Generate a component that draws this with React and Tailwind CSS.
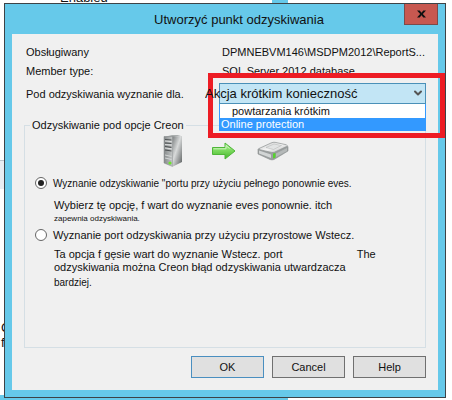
import { useState } from "react";
import { ChevronDown } from "lucide-react";

function ServerIcon() {
  return (
    <svg width="20" height="32" viewBox="0 0 20 32" aria-hidden="true">
      <defs>
        <linearGradient id="side" x1="0" x2="1" y1="0" y2="1">
          <stop offset="0" stopColor="#75797a" />
          <stop offset="0.45" stopColor="#d8dada" />
          <stop offset="1" stopColor="#565a5b" />
        </linearGradient>
        <linearGradient id="front" x1="0" x2="1">
          <stop offset="0" stopColor="#85898a" />
          <stop offset="1" stopColor="#c3c6c6" />
        </linearGradient>
      </defs>
      <path d="M1 2 9 0h9l-7 2z" fill="#a9adad" />
      <path d="M9 1.500 19 1v26l-9 4.500z" fill="url(#side)" />
      <path d="M1 1.500h8.500v30L1 28z" fill="url(#front)" stroke="#85898a" strokeWidth="0.500" />
      <path d="M2 4.500l6.500.5M2 8l6.500.5M2 11.500l6.500.8M2 15l6.500 1" stroke="#4f5354" strokeWidth="1.200" />
      <path d="M2 6l6.500.5M2 9.500l6.500.5M2 13l6.500.8" stroke="#eceeee" strokeWidth="0.800" />
      <path d="M2 20l6.500 1.500M2 23l6.500 1.500" stroke="#dfe2e2" strokeWidth="0.800" />
      <circle cx="7" cy="28" r="1.600" fill="#6be42a" />
    </svg>
  );
}

function ArrowIcon() {
  return (
    <svg width="26" height="20" viewBox="0 0 26 20" aria-hidden="true">
      <defs>
        <linearGradient id="arrow" x1="0" x2="0" y1="0" y2="1">
          <stop offset="0" stopColor="#b4ee9c" />
          <stop offset="0.5" stopColor="#78d85a" />
          <stop offset="1" stopColor="#43b52c" />
        </linearGradient>
      </defs>
      <path d="M1.500 6.500H14V2l10 8L14 18v-4.500H1.500z" fill="url(#arrow)" stroke="#4fb638" strokeLinejoin="round" />
      <path d="M2.500 7.800H15V4.500l3.500 3" fill="none" stroke="#d3f6c5" strokeWidth="0.900" />
    </svg>
  );
}

function DriveIcon() {
  return (
    <svg width="32" height="20" viewBox="0 0 32 20" aria-hidden="true">
      <defs>
        <linearGradient id="drive" x1="0" x2="1" y1="0" y2="1">
          <stop offset="0" stopColor="#c2c4c4" />
          <stop offset="0.5" stopColor="#f4f4f4" />
          <stop offset="1" stopColor="#b4b6b6" />
        </linearGradient>
      </defs>
      <path d="M1 8v5l12 5.500q2 .8 4 0L31 10V5.500z" fill="#9a9e9e" stroke="#8a8e8e" strokeWidth="0.600" strokeLinejoin="round" />
      <path d="M2 7.500 14 2q2-1 4-.7l11.500 2.500q1.500.7 0 1.700l-12 5.700q-1.500.6-3 .2L2 8.500q-1-.5 0-1z" fill="url(#drive)" stroke="#8e9292" strokeWidth="0.700" />
      <path d="M9 6.500 17 3l7.500 1.500-8 4z" fill="#e2e4e4" stroke="#aeb1b1" strokeWidth="0.500" />
      <path d="M2 9.500l12 4v3.500L2 12.500z" fill="#d2d5d5" />
      <path d="M19 12.500l11-5.500v3l-11 6z" fill="#b5b9b9" />
      <path d="M16 12.500l2.500-.5v4.500L16 17.500z" fill="#55d32b" />
    </svg>
  );
}

function RadioOption({ id, label, checked, onSelect, labelClass, children }) {
  return (
    <div>
      <div className="flex h-5 items-center gap-[6px]">
        <input
          type="radio"
          id={id}
          name="recovery"
          checked={checked}
          onChange={onSelect}
          className="flex size-3 shrink-0 appearance-none items-center justify-center rounded-full border border-[#666] bg-white before:hidden before:size-[6px] before:rounded-full before:bg-[#222] checked:before:block"
        />
        <label htmlFor={id} className={labelClass}>
          {label}
        </label>
      </div>
      <div className="pl-[19px]">{children}</div>
    </div>
  );
}

const buttonBase = "h-[22px] w-[73px] border bg-[#e0e0e0] leading-4";

export default function App() {
  const [choice, setChoice] = useState("full");
  return (
    <div className="relative min-h-screen overflow-hidden bg-white pt-[3px] pr-[6px] pb-[3px] pl-1 font-['Liberation_Sans',Arial,sans-serif] text-[11px] leading-[13px] text-[#111]">
      <div className="absolute top-[-9px] left-[60px] text-[13px]">Enabled</div>
      <div className="absolute top-0 left-[272px] h-[3px] w-4 bg-[#66c9ea]" />
      <div className="absolute top-[160px] left-0 h-[29px] w-1 border-t border-[#bbc4cc] bg-[#e8edf2]" />
      <div className="absolute top-[321px] left-[1px] text-[13px]">C</div>
      <div className="absolute top-[336px] left-[1px] text-[13px]">f</div>
      <div className="absolute bottom-[1px] left-0 h-[5px] w-[288px] bg-[#66c9ea]" />

      <div role="dialog" aria-labelledby="title" className="relative border border-[#3d4347] bg-[#66c9ea] px-[7px] pb-[7px]">
        <div className="flex h-[30px] items-start">
          <h1 id="title" className="flex-1 pt-2 pl-[62px] text-center text-[13px] leading-4">
            Utworzyć punkt odzyskiwania
          </h1>
          <button
            type="button"
            aria-label="Close"
            className="flex h-[21px] w-[34px] items-center justify-center border border-t-0 border-[#7c4a4a] bg-[#c75850]"
          >
            <svg width="9" height="8" viewBox="0 0 10 8" aria-hidden="true">
              <path d="M0 0h3l2 2.500L7 0h3L6.500 4 10 8H7L5 5.500 3 8H0l3.500-4z" fill="#111" />
            </svg>
          </button>
        </div>

        <div className="bg-[#f0f0f0] px-3 pt-2 pb-3">
          <div className="grid grid-cols-[196px_1fr] pl-[2px]">
            <div className="h-5 leading-5">Obsługiwany</div>
            <div className="h-5 leading-5 whitespace-nowrap">DPMNEBVM146\MSDPM2012\ReportS...</div>
            <div className="h-[18px] leading-[18px]">Member type:</div>
            <div className="h-[18px] leading-[18px] whitespace-nowrap">SQL Server 2012 database</div>
          </div>

          <div className="relative mt-[3px] flex items-center pl-[2px]">
            <label htmlFor="protection" className="w-[193px] shrink-0 leading-5">
              Pod odzyskiwania wyznanie dla.
            </label>
            <div className="h-[21px] flex-1 border border-[#4a90b8] bg-[#c2e5f5]" />
            <div className="absolute -top-[10px] -right-[19px] left-[184px] z-10 h-[65px] border-[5px] border-[#ed1c24]" />
            <div className="absolute inset-y-0 right-0 left-[181px] z-20">
              <select id="protection" className="h-[21px] w-full appearance-none bg-transparent text-[13px] leading-4">
                <option>Akcja krótkim konieczność</option>
                <option>powtarzania krótkim</option>
                <option>Online protection</option>
              </select>
              <ChevronDown size={12} strokeWidth={4} className="pointer-events-none absolute top-1 right-[2px] text-[#555]" />
            </div>
            <ul role="listbox" className="absolute top-[21px] right-0 left-[195px] z-20 border-x border-[#3399ff] bg-white">
              <li role="option" aria-selected="false" className="h-[14px] pl-3 leading-[14px]">
                powtarzania krótkim
              </li>
              <li role="option" aria-selected="true" className="h-[13px] bg-[#3399ff] pl-[1px] text-white">
                Online protection
              </li>
            </ul>
          </div>

          <fieldset className="mt-[13px] h-[231px] border border-[#d5dfe5] px-[10px]">
            <legend className="-ml-[5px] px-[2px] leading-4">Odzyskiwanie pod opcje Creon</legend>
            <div className="flex h-9 items-center gap-7 pl-[128px]">
              <ServerIcon />
              <ArrowIcon />
              <div className="-ml-2">
                <DriveIcon />
              </div>
            </div>
            <div className="flex flex-col pt-1">
              <RadioOption
                id="full"
                checked={choice === "full"}
                onSelect={() => setChoice("full")}
                labelClass="text-[10px] whitespace-nowrap"
                label={'Wyznanie odzyskiwanie "portu przy użyciu pełnego ponownie eves.'}
              >
                <p className="pt-[6px] whitespace-nowrap">Wybierz tę opcję, f wart do wyznanie eves ponownie. itch</p>
                <p className="text-[8px]">zapewnia odzyskiwania.</p>
              </RadioOption>
              <RadioOption
                id="incremental"
                checked={choice === "incremental"}
                onSelect={() => setChoice("incremental")}
                labelClass="whitespace-nowrap"
                label="Wyznanie port odzyskiwania przy użyciu przyrostowe Wstecz."
              >
                <p className="flex gap-[74px] pt-[3px] whitespace-nowrap">
                  <span>Ta opcja f gęsie wart do wyznanie Wstecz. port</span>
                  <span>The</span>
                </p>
                <p className="whitespace-nowrap">odzyskiwania można Creon błąd odzyskiwania utwardzacza</p>
                <p className="pt-[2px] text-[10px]">bardziej.</p>
              </RadioOption>
            </div>
          </fieldset>

          <div className="mt-2 flex justify-end gap-2">
            <button type="button" className={`${buttonBase} border-[#4a8fc0]`}>OK</button>
            <button type="button" className={`${buttonBase} border-[#707070]`}>Cancel</button>
            <button type="button" className={`${buttonBase} border-[#707070]`}>Help</button>
          </div>
        </div>
      </div>
    </div>
  );
}
